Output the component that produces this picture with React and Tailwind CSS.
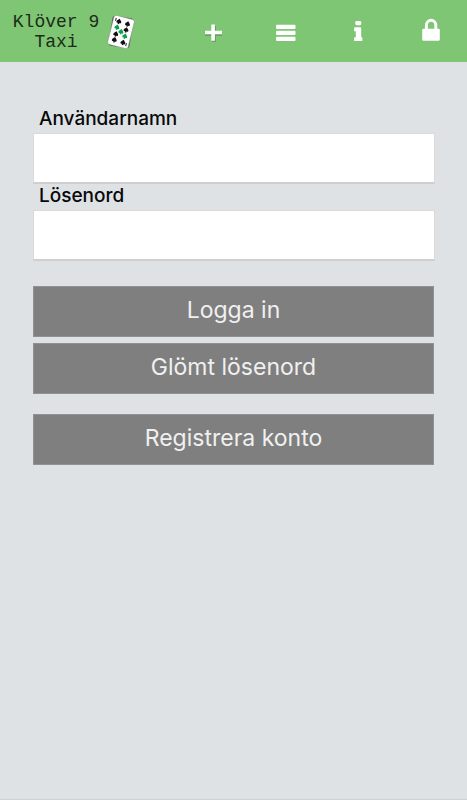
import { useState } from "react";

// Playing card logo
function CardLogo() {
  return (
    <svg width="30" height="36" viewBox="0 0 30 36" aria-hidden="true">
      <defs>
        <path
          id="club"
          d="M0 -2.6 C0.8 -1.6 2.5 -0.6 2.5 0.8 C2.5 2 1 2.1 0.5 1.5 L0.9 2.8 H-0.9 L-0.5 1.5 C-1 2.1 -2.5 2 -2.5 0.8 C-2.5 -0.6 -0.8 -1.6 0 -2.6 Z"
        />
      </defs>
      <g transform="rotate(14 15 18)">
        <rect x="4.5" y="3" width="21" height="30" rx="2.5" fill="#5d685d" transform="rotate(-6 15 18)" />
        <rect x="4.5" y="3" width="21" height="30" rx="2.5" fill="#fff" stroke="#777" strokeWidth="0.4" />
        <path d="M7 5.5 v3 M23 27.5 v3" stroke="#222" strokeWidth="1" />
        <g fill="#111">
          <use href="#club" x="10.5" y="8" />
          <use href="#club" x="19.5" y="8.5" />
          <use href="#club" x="19.5" y="14.5" />
          <use href="#club" x="10.5" y="21" />
          <use href="#club" x="10.5" y="27" />
          <use href="#club" x="19.5" y="27.5" />
        </g>
        <g fill="#0fa04c">
          <use href="#club" x="10" y="14.2" />
          <use href="#club" x="15" y="17.6" />
          <use href="#club" x="19.8" y="21" />
        </g>
      </g>
    </svg>
  );
}

// Header icons
const navItems = [
  {
    label: "Ny bokning",
    icon: (
      <>
        <path d="M10 6 h4 v6 h6 v4 h-6 v6 h-4 v-6 h-7 v-4 h7 z" fill="#4d8046" opacity="0.5" />
        <path d="M9.3 4.5 h3.6 v6.3 H20 v3.4 H12.9 V20.8 h-3.6 V14.2 H3 v-3.4 h6.3 z" />
      </>
    ),
  },
  {
    label: "Meny",
    icon: (
      <>
        <rect x="2" y="4.8" width="19.5" height="4.2" rx="1" />
        <rect x="2" y="10.8" width="19.5" height="4.2" rx="1" />
        <rect x="2" y="16.8" width="19.5" height="4.2" rx="1" />
      </>
    ),
  },
  {
    label: "Information",
    icon: (
      <>
        <rect x="9.3" y="1" width="6" height="4.2" rx="1.4" />
        <path d="M9 7.3 h5.2 q1 0 1 1 v9 h0.3 q0.9 0 0.9 0.9 v2 q0 0.9 -0.9 0.9 H9 q-0.9 0 -0.9 -0.9 v-2 q0 -0.9 0.9 -0.9 h0.8 v-6 H9 q-0.9 0 -0.9 -0.9 v-2.2 q0 -0.9 0.9 -0.9 z" />
      </>
    ),
  },
  {
    label: "Logga in",
    icon: (
      <>
        <path d="M7.4 10 V5.2 a4.7 5 0 0 1 9.4 0 V10" fill="none" stroke="#fff" strokeWidth="3" />
        <rect x="3.2" y="8.8" width="17.6" height="12" rx="1.4" />
      </>
    ),
  },
];

function Header() {
  return (
    <header className="flex h-[62px] items-center bg-[#7fc674] pt-0.5">
      <div className="flex w-[38%] items-center gap-1.5 pl-3">
        <h1 className="w-[88px] shrink-0 text-center font-['Liberation_Mono',monospace] text-lg leading-5 whitespace-nowrap text-[#1c2b1a]">
          Klöver 9
          <br />
          Taxi
        </h1>
        <CardLogo />
      </div>
      <nav className="grid flex-1 grid-cols-4">
        {navItems.map((item) => (
          <a key={item.label} href="#" aria-label={item.label} className="flex justify-center">
            <svg width="24" height="24" viewBox="0 0 24 24" fill="#fff" overflow="visible">
              {item.icon}
            </svg>
          </a>
        ))}
      </nav>
    </header>
  );
}

function Field({ id, label, type, value, onChange }) {
  return (
    <div className="flex flex-col">
      <label htmlFor={id} className="pb-0.5 pl-1.5 text-[19px] leading-6 font-medium text-[#080808]">
        {label}
      </label>
      <input
        id={id}
        name={id}
        type={type}
        value={value}
        onChange={onChange}
        className="h-[51px] w-full border border-b-2 border-[#dadada] border-b-[#cfcfcf] bg-white px-2 text-lg outline-none"
      />
    </div>
  );
}

const buttonStyle =
  "h-[51px] w-full border border-[#909191] bg-[#7f7f7f] pb-1 text-[23px] leading-7 text-[#f0f0f0]";

export default function App() {
  const [user, setUser] = useState({ username: "", password: "" });

  function handleInputChange(event) {
    const { name, value } = event.target;
    setUser((prev) => ({ ...prev, [name]: value }));
  }

  return (
    <div className="flex min-h-screen flex-col border-b border-[#d0d0d0] bg-[#dee2e5] font-[Inter,sans-serif]">
      <Header />
      <main className="pt-[45px] pr-8 pl-[33px]">
        <form onSubmit={(event) => event.preventDefault()}>
          <Field
            id="username"
            label="Användarnamn"
            type="text"
            value={user.username}
            onChange={handleInputChange}
          />
          <Field
            id="password"
            label="Lösenord"
            type="password"
            value={user.password}
            onChange={handleInputChange}
          />

          {/* Buttons - Section */}
          <div className="mt-[25px] flex flex-col pr-px">
            <button type="submit" className={buttonStyle}>
              Logga in
            </button>
            <button type="button" className={`${buttonStyle} mt-1.5`}>
              Glömt lösenord
            </button>
            <button type="button" className={`${buttonStyle} mt-5`}>
              Registrera konto
            </button>
          </div>
        </form>
      </main>
    </div>
  );
}
